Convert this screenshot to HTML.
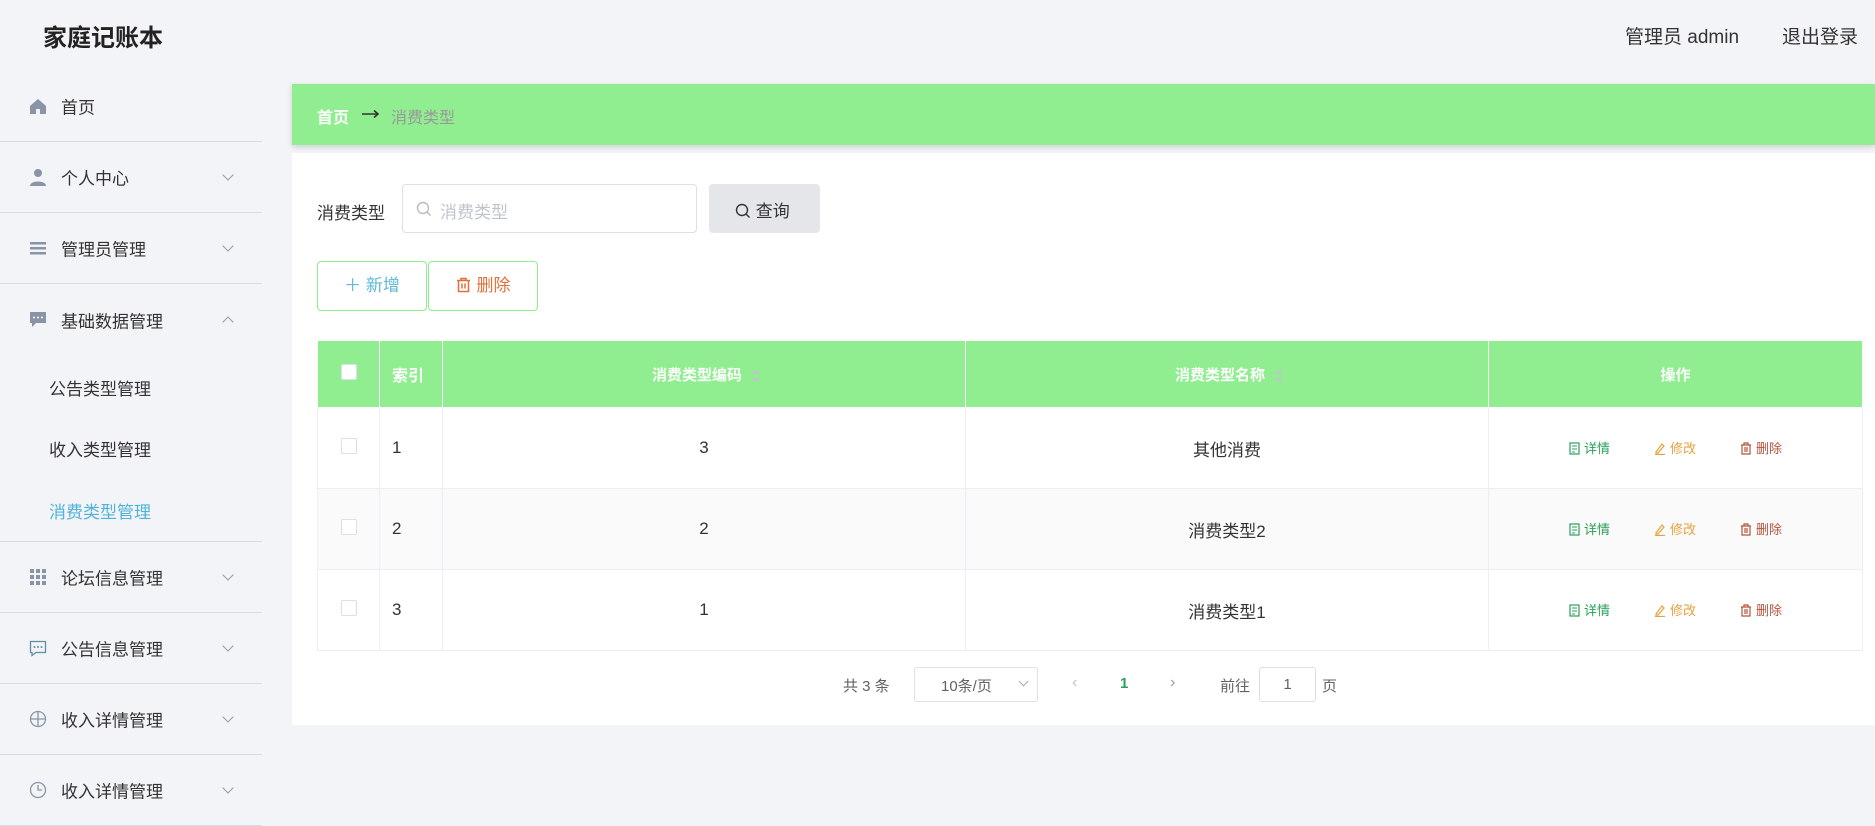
<!DOCTYPE html>
<html><head><meta charset="utf-8"><style>
*{box-sizing:border-box;margin:0;padding:0}
body{width:1875px;height:811px;background:#f3f4f7;font-family:"Liberation Sans","Noto Sans CJK SC",sans-serif;color:#333;position:relative;overflow:hidden}
.a{position:absolute}
.title{left:43px;top:18px;font-size:24px;font-weight:bold;color:#222}
.hr{top:22px;font-size:19px;color:#333}
.side .it{position:absolute;left:0;width:262px;height:71px;border-bottom:1px solid #d8dbe0;font-size:17px;color:#333}
.side .it span{position:absolute;left:61px;top:50%;transform:translateY(-50%)}
.side .it i{position:absolute;left:29px;top:50%;transform:translateY(-50%);width:18px;height:18px}
.side .it b{position:absolute;right:30px;top:50%;margin-top:-6px;width:8px;height:8px;border-right:1px solid #999;border-bottom:1px solid #999;transform:rotate(45deg);font-weight:normal}
.side .it b.up{transform:rotate(-135deg);margin-top:-2px}
.sub{position:absolute;left:49px;font-size:17px;color:#333}
.bc{left:292px;top:84px;width:1583px;height:61px;background:#90ee90;box-shadow:0 2px 6px rgba(0,0,0,.15)}
.panel{left:292px;top:153px;width:1583px;height:572px;background:#fff}
table{position:absolute;left:317px;top:340px;width:1546px;border-collapse:collapse;font-size:17px}
td,th{border:1px solid #ebeef5;text-align:center;font-weight:normal}
th{background:#90ee90;color:#fff;height:67px;font-weight:bold;font-size:15px;border-color:#fff}
td{height:81px;color:#333}
tr.s td{background:#fafafa}
.cb{display:inline-block;width:16px;height:16px;border:1px solid #dcdfe6;border-radius:2px;background:#fff}
.op{font-size:13px;display:inline-block;margin:0 22px}
.op svg{vertical-align:-2px;margin-right:4px}
.sort{display:inline-block;margin-left:6px;width:8px;height:12px;vertical-align:middle;position:relative}
.sort:before{content:"";position:absolute;top:0;border:4px solid transparent;border-bottom-color:#c0c4cc;border-top:0}
.sort:after{content:"";position:absolute;bottom:0;border:4px solid transparent;border-top-color:#c0c4cc;border-bottom:0}
</style></head><body>
<div class="a title">家庭记账本</div>
<div class="a hr" style="left:1625px">管理员 admin</div>
<div class="a hr" style="left:1782px">退出登录</div>

<div class="side">
<div class="it" style="top:71px"><i><svg width="18" height="18" viewBox="0 0 18 18"><path d="M1 9L9 2l8 7v8H11v-5H7v5H1z" fill="#8a94a6"/></svg></i><span>首页</span></div>
<div class="it" style="top:142px"><i><svg width="18" height="18"><circle cx="9" cy="5" r="4" fill="#8a94a6"/><path d="M1 18c0-6 16-6 16 0z" fill="#8a94a6"/></svg></i><span>个人中心</span><b></b></div>
<div class="it" style="top:213px"><i><svg width="18" height="18"><rect x="1" y="3" width="16" height="2.5" fill="#8a94a6"/><rect x="1" y="8" width="16" height="2.5" fill="#8a94a6"/><rect x="1" y="13" width="16" height="2.5" fill="#8a94a6"/></svg></i><span>管理员管理</span><b></b></div>
<div class="it" style="top:284px;height:258px"><i style="top:35px"><svg width="18" height="18"><path d="M1 2h16v11H7l-4 4v-4H1z" fill="#8a94a6"/><circle cx="5" cy="7.5" r="1" fill="#fff"/><circle cx="9" cy="7.5" r="1" fill="#fff"/><circle cx="13" cy="7.5" r="1" fill="#fff"/></svg></i><span style="top:36px">基础数据管理</span><b class="up" style="top:36px"></b></div>
<div class="sub" style="top:375px">公告类型管理</div>
<div class="sub" style="top:436px">收入类型管理</div>
<div class="sub" style="top:498px;color:#4fb3d9">消费类型管理</div>
<div class="it" style="top:542px"><i><svg width="18" height="18"><g fill="#8a94a6"><rect x="1" y="1" width="4" height="4"/><rect x="7" y="1" width="4" height="4"/><rect x="13" y="1" width="4" height="4"/><rect x="1" y="7" width="4" height="4"/><rect x="7" y="7" width="4" height="4"/><rect x="13" y="7" width="4" height="4"/><rect x="1" y="13" width="4" height="4"/><rect x="7" y="13" width="4" height="4"/><rect x="13" y="13" width="4" height="4"/></g></svg></i><span>论坛信息管理</span><b></b></div>
<div class="it" style="top:613px"><i><svg width="18" height="18"><path d="M1.5 2.5h15v11H7l-4 3v-3H1.5z" fill="none" stroke="#5a8fa6" stroke-width="1.3"/><circle cx="5.5" cy="8" r="1" fill="#5a8fa6"/><circle cx="9" cy="8" r="1" fill="#5a8fa6"/><circle cx="12.5" cy="8" r="1" fill="#5a8fa6"/></svg></i><span>公告信息管理</span><b></b></div>
<div class="it" style="top:684px"><i><svg width="18" height="18"><circle cx="9" cy="9" r="7.5" fill="none" stroke="#8a94a6" stroke-width="1.3"/><path d="M9 1v16M1 9h16" stroke="#8a94a6" stroke-width="1.3"/></svg></i><span>收入详情管理</span><b></b></div>
<div class="it" style="top:755px"><i><svg width="18" height="18"><circle cx="9" cy="9" r="7.5" fill="none" stroke="#8a94a6" stroke-width="1.3"/><path d="M9 4v5h4" fill="none" stroke="#8a94a6" stroke-width="1.3"/></svg></i><span>收入详情管理</span><b></b></div>
</div>

<div class="a bc"><span class="a" style="left:25px;top:20px;color:#fff;font-weight:bold;font-size:16px">首页</span><svg class="a" style="left:70px;top:25px" width="18" height="10"><path d="M0 5h16M12 1.5l4 3.5-4 3.5" fill="none" stroke="#333" stroke-width="1.6"/></svg><span class="a" style="left:99px;top:20px;color:#999;font-size:16px">消费类型</span></div>
<div class="a panel"></div>
<div class="a" style="left:317px;top:199px;font-size:17px">消费类型</div>
<div class="a" style="left:402px;top:184px;width:295px;height:49px;border:1px solid #dcdfe6;border-radius:4px;background:#fff"><svg class="a" style="left:13px;top:16px" width="16" height="16"><circle cx="7" cy="7" r="5.5" fill="none" stroke="#bbb" stroke-width="1.4"/><path d="M11 11l3.5 3.5" stroke="#bbb" stroke-width="1.4"/></svg><span class="a" style="left:37px;top:13px;color:#c0c4cc;font-size:17px">消费类型</span></div>
<div class="a" style="left:709px;top:184px;width:111px;height:49px;background:#e4e6e9;border-radius:4px;font-size:17px;padding:13px 0 0 26px"><svg style="vertical-align:-2px" width="16" height="16"><circle cx="7" cy="7" r="5.5" fill="none" stroke="#333" stroke-width="1.4"/><path d="M11 11l3.5 3.5" stroke="#333" stroke-width="1.4"/></svg> 查询</div>
<div class="a" style="left:317px;top:261px;width:110px;height:50px;border:1px solid #90ee90;border-radius:4px;background:#fff;color:#5fb8d6;font-size:17px;text-align:center;line-height:48px">＋ 新增</div>
<div class="a" style="left:428px;top:261px;width:110px;height:50px;border:1px solid #90ee90;border-radius:4px;background:#fff;color:#e0703a;font-size:17px;text-align:center;line-height:48px"><svg style="vertical-align:-2px;margin-right:6px" width="15" height="16"><path d="M1 3.5h13M5 3.5V1.5h5v2M2.5 3.5v11h10v-11M6 6.5v5M9 6.5v5" fill="none" stroke="#e0703a" stroke-width="1.5"/></svg>删除</div>

<table>
<tr><th style="width:62px"><span class="cb"></span></th><th style="width:63px;text-align:left;padding-left:12px;font-size:16px">索引</th><th style="width:523px">消费类型编码<span class="sort"></span></th><th style="width:523px">消费类型名称<span class="sort"></span></th><th>操作</th></tr>
<tr><td><span class="cb"></span></td><td style="text-align:left;padding-left:12px">1</td><td>3</td><td>其他消费</td><td><span class="op" style="color:#2aa05a"><svg width="11" height="13"><rect x="1" y="1" width="9" height="11" fill="none" stroke="#2aa05a" stroke-width="1.2"/><path d="M3 4h5M3 7h5M3 10h3" stroke="#2aa05a"/></svg>详情</span><span class="op" style="color:#e6a23c"><svg width="12" height="13"><path d="M2 10L8 2l2 2-6 7H2zM1 12.5h10" fill="none" stroke="#e6a23c" stroke-width="1.2"/></svg>修改</span><span class="op" style="color:#b5533c"><svg width="12" height="13"><path d="M1 3h10M4 3V1h4v2M2 3v9h8V3M5 5v5M7 5v5" fill="none" stroke="#b5533c" stroke-width="1.2"/></svg>删除</span></td></tr>
<tr class="s"><td><span class="cb"></span></td><td style="text-align:left;padding-left:12px">2</td><td>2</td><td>消费类型2</td><td><span class="op" style="color:#2aa05a"><svg width="11" height="13"><rect x="1" y="1" width="9" height="11" fill="none" stroke="#2aa05a" stroke-width="1.2"/><path d="M3 4h5M3 7h5M3 10h3" stroke="#2aa05a"/></svg>详情</span><span class="op" style="color:#e6a23c"><svg width="12" height="13"><path d="M2 10L8 2l2 2-6 7H2zM1 12.5h10" fill="none" stroke="#e6a23c" stroke-width="1.2"/></svg>修改</span><span class="op" style="color:#b5533c"><svg width="12" height="13"><path d="M1 3h10M4 3V1h4v2M2 3v9h8V3M5 5v5M7 5v5" fill="none" stroke="#b5533c" stroke-width="1.2"/></svg>删除</span></td></tr>
<tr><td><span class="cb"></span></td><td style="text-align:left;padding-left:12px">3</td><td>1</td><td>消费类型1</td><td><span class="op" style="color:#2aa05a"><svg width="11" height="13"><rect x="1" y="1" width="9" height="11" fill="none" stroke="#2aa05a" stroke-width="1.2"/><path d="M3 4h5M3 7h5M3 10h3" stroke="#2aa05a"/></svg>详情</span><span class="op" style="color:#e6a23c"><svg width="12" height="13"><path d="M2 10L8 2l2 2-6 7H2zM1 12.5h10" fill="none" stroke="#e6a23c" stroke-width="1.2"/></svg>修改</span><span class="op" style="color:#b5533c"><svg width="12" height="13"><path d="M1 3h10M4 3V1h4v2M2 3v9h8V3M5 5v5M7 5v5" fill="none" stroke="#b5533c" stroke-width="1.2"/></svg>删除</span></td></tr>
</table>

<div class="a" style="left:843px;top:675px;font-size:15px;color:#606266">共 3 条</div>
<div class="a" style="left:914px;top:667px;width:124px;height:35px;border:1px solid #dcdfe6;border-radius:3px;background:#fff;font-size:15px;color:#606266;padding:7px 0 0 26px">10条/页<span class="a" style="right:10px;top:10px;width:7px;height:7px;border-right:1px solid #aaa;border-bottom:1px solid #aaa;transform:rotate(45deg)"></span></div>
<div class="a" style="left:1072px;top:674px;color:#c0c4cc;font-size:16px">‹</div>
<div class="a" style="left:1120px;top:675px;color:#2aa05a;font-size:15px;font-weight:bold">1</div>
<div class="a" style="left:1170px;top:674px;color:#999;font-size:16px">›</div>
<div class="a" style="left:1220px;top:675px;font-size:15px;color:#606266">前往</div>
<div class="a" style="left:1259px;top:667px;width:57px;height:35px;border:1px solid #dcdfe6;border-radius:3px;background:#fff;font-size:15px;text-align:center;line-height:33px;color:#606266">1</div>
<div class="a" style="left:1322px;top:675px;font-size:15px;color:#606266">页</div>
</body></html>
